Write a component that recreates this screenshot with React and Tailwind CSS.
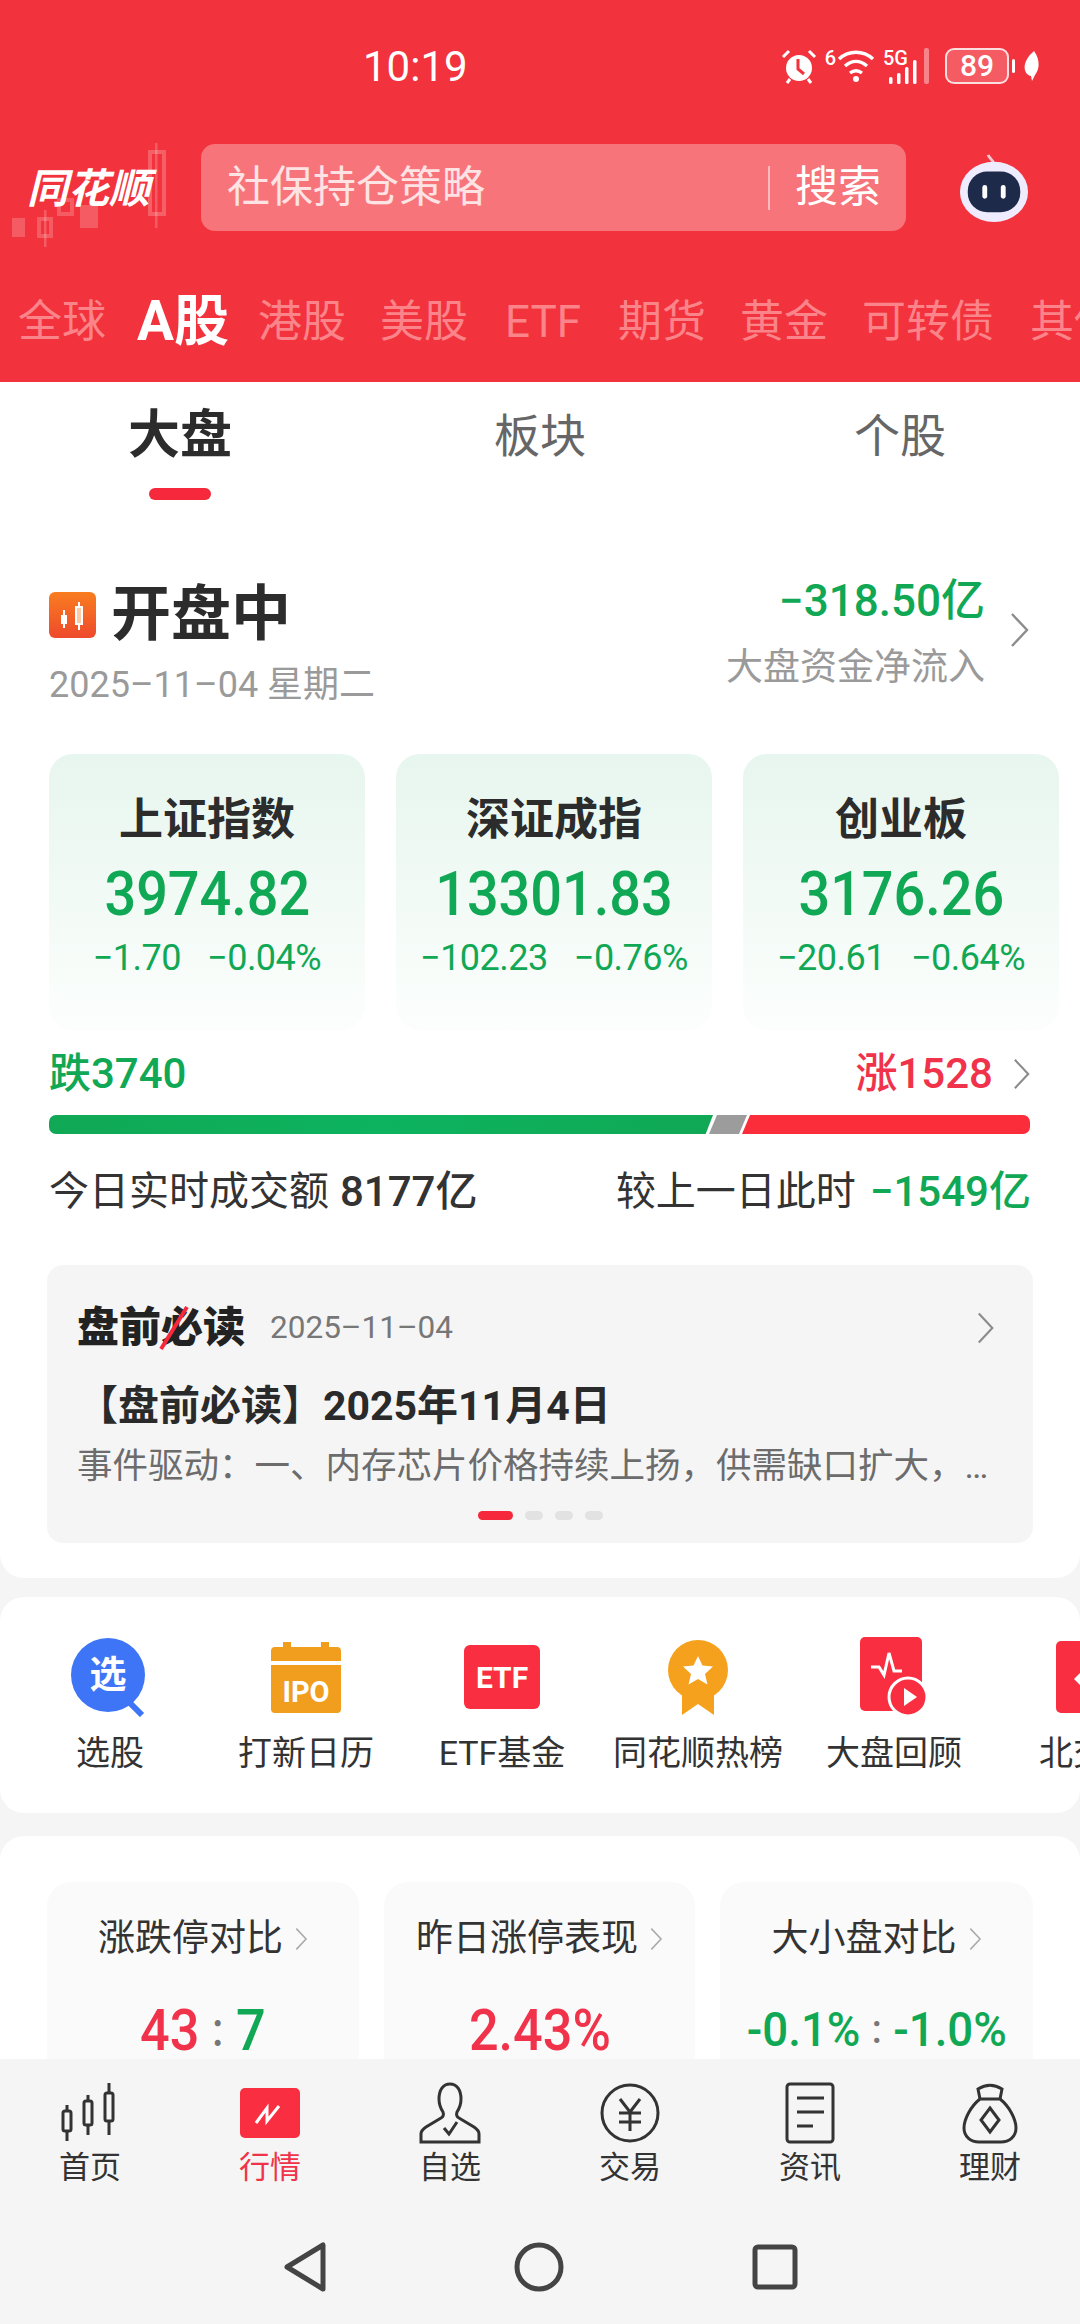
const FONT = "font-['Roboto','Noto_Sans_CJK_SC',sans-serif]";

const indexCards = [
  { name: "上证指数", value: "3974.82", change: "−1.70", pct: "−0.04%" },
  { name: "深证成指", value: "13301.83", change: "−102.23", pct: "−0.76%" },
  { name: "创业板", value: "3176.26", change: "−20.61", pct: "−0.64%" },
];

function Chevron({ className }) {
  return (
    <svg viewBox="0 0 20 36" fill="none" stroke="currentColor" strokeWidth="2.4" className={className}>
      <path d="M2 2l15 16L2 34" />
    </svg>
  );
}

function Logo() {
  return (
    <div className="relative h-[87px] w-[201px] shrink-0">
      <svg viewBox="0 0 170 120" className="absolute left-0 top-[-14px] h-[120px] w-[170px]" fill="#fff" fillOpacity="0.2">
        <rect x="12" y="88" width="13" height="19" />
        <rect x="39" y="89" width="12" height="17" fill="none" stroke="#fff" strokeOpacity="0.2" strokeWidth="4" />
        <rect x="44" y="80" width="2.5" height="37" />
        <rect x="59" y="70" width="13" height="14" fill="none" stroke="#fff" strokeOpacity="0.2" strokeWidth="4" />
        <rect x="80" y="75" width="18" height="23" />
        <rect x="150" y="22" width="14" height="62" fill="none" stroke="#fff" strokeOpacity="0.22" strokeWidth="4" />
        <rect x="155" y="13" width="2.5" height="85" />
      </svg>
      <span className="absolute left-[27px] top-[25px] text-[41px] font-bold italic leading-none text-white">
        同花顺
      </span>
    </div>
  );
}

function Robot() {
  return (
    <svg viewBox="0 0 74 72" className="h-[70px] w-[72px]">
      <path d="M37 12c0-5-5-6-6-10" fill="none" stroke="#f6c6d4" strokeWidth="3" />
      <ellipse cx="37" cy="40" rx="35" ry="31" fill="#f0ecff" />
      <rect x="10" y="19" width="54" height="42" rx="20" fill="#1e2a4a" />
      <rect x="25" y="33" width="5" height="14" rx="2.5" fill="#fff" />
      <rect x="44" y="33" width="5" height="14" rx="2.5" fill="#fff" />
    </svg>
  );
}

function StatusIcons() {
  return (
    <div className="flex items-center text-white">
      <svg viewBox="0 0 36 36" className="h-[36px] w-[36px]">
        <circle cx="18" cy="20" r="13" fill="#fff" />
        <path d="M17 11v10l6 5" fill="none" stroke="#f2323c" strokeWidth="3" />
        <path d="M2 9l6-6M34 9l-6-6" stroke="#fff" strokeWidth="3" />
        <path d="M9 31l-3 4M27 31l3 4" stroke="#fff" strokeWidth="3" />
      </svg>
      <span className="ml-[8px] self-start text-[20px] font-medium leading-none">6</span>
      <svg viewBox="0 0 38 34" className="ml-[1px] h-[34px] w-[38px]" fill="none" stroke="#fff" strokeWidth="3.4">
        <path d="M2 10c10-9 24-9 34 0M8 17c7-6 15-6 22 0M13 24c4-3 8-3 12 0" />
        <circle cx="19" cy="30" r="3" fill="#fff" stroke="none" />
      </svg>
      <div className="relative ml-[8px] h-[36px] w-[50px]">
        <span className="absolute left-0 top-0 text-[20px] font-medium leading-none">5G</span>
        <svg viewBox="0 0 50 36" className="absolute inset-0 h-[36px] w-[50px]" fill="#fff">
          <rect x="6" y="29" width="3.5" height="7" rx="1.5" />
          <rect x="14" y="25" width="3.5" height="11" rx="1.5" />
          <rect x="22" y="19" width="3.5" height="17" rx="1.5" />
          <rect x="30" y="12" width="3.5" height="24" rx="1.5" />
          <rect x="41" y="0" width="5" height="36" rx="2" fillOpacity="0.4" />
        </svg>
      </div>
      <div className="relative ml-[12px] flex h-[36px] w-[64px] items-center justify-center overflow-hidden rounded-[9px] border-2 border-white/80 bg-white/20">
        <span className="text-[30px] font-medium leading-none">89</span>
      </div>
      <div className="ml-[3px] h-[14px] w-[3px] rounded-full bg-white" />
      <svg viewBox="0 0 18 30" className="ml-[7px] h-[30px] w-[18px]" fill="#fff">
        <path d="M12 0c6 8 6 18 1 24l-3 6-1-5C2 24-2 12 12 0z" />
      </svg>
    </div>
  );
}

function MarketTabs() {
  const plain = "shrink-0 text-[44px] leading-none text-[#fa8489]";
  return (
    <div className="flex flex-1 items-center gap-[34px] overflow-hidden whitespace-nowrap pl-[18px] pt-[30px]">
      <span className={plain}>全球</span>
      <span className="-ml-[3px] -mr-[5px] shrink-0 text-[55px] font-bold leading-none text-white">A股</span>
      <span className={plain}>港股</span>
      <span className={plain}>美股</span>
      <span className="mx-[3px] shrink-0 text-[44px] leading-none text-[#fa8489]">ETF</span>
      <span className={plain}>期货</span>
      <span className={plain}>黄金</span>
      <span className={plain}>可转债</span>
      <span className="ml-[2px] shrink-0 text-[44px] leading-none text-[#fa8489]">其他</span>
    </div>
  );
}

function Header() {
  return (
    <div className="flex h-[382px] shrink-0 flex-col bg-[#f2323c]">
      <div className="flex h-[144px] shrink-0 items-start pl-[363px] pr-[40px] pt-[48px]">
        <span className="text-[42px] font-normal leading-[38px] text-white">10:19</span>
        <div className="ml-auto">
          <StatusIcons />
        </div>
      </div>
      <div className="flex h-[87px] shrink-0 items-center">
        <Logo />
        <div className="flex h-[87px] w-[705px] shrink-0 items-center rounded-[14px] bg-[#f8747b] pl-[26px]">
          <span className="text-[43px] leading-none text-white/80">社保持仓策略</span>
          <div className="ml-auto h-[44px] w-[2px] bg-white/50" />
          <span className="ml-[25px] mr-[25px] text-[43px] leading-none text-white">搜索</span>
        </div>
        <div className="ml-[52px]">
          <Robot />
        </div>
      </div>
      <MarketTabs />
    </div>
  );
}

function IndexCard({ card }) {
  return (
    <div className="flex h-[276px] w-[316px] flex-col items-center rounded-[24px] bg-gradient-to-b from-[#e7f6ee] to-[#fcfefd] pt-[39px]">
      <div className="text-[44px] font-bold leading-[54px] text-[#2c2c2c]">{card.name}</div>
      <div className="mt-[12px] scale-x-[0.9] text-[62px] font-medium leading-[70px] text-[#10a855]">
        {card.value}
      </div>
      <div className="mt-[9px] flex gap-[26px] text-[36px] leading-[40px] tracking-[-0.5px] text-[#10a855]">
        <span>{card.change}</span>
        <span>{card.pct}</span>
      </div>
    </div>
  );
}

function BreadthBar() {
  return (
    <div className="relative mt-[17px] flex h-[19px] w-[981px] overflow-hidden rounded-[7px]">
      <div className="h-full w-[664px] bg-gradient-to-r from-[#10a855] via-[#0db35f] to-[#10a855] [clip-path:polygon(0_0,100%_0,98.9%_100%,0_100%)]" />
      <div className="-ml-[4px] h-full w-[38px] bg-[#9c9c9c] [clip-path:polygon(21%_0,100%_0,79%_100%,0_100%)]" />
      <div className="-ml-[5px] h-full flex-1 bg-[#fb2d3a] [clip-path:polygon(2.8%_0,100%_0,100%_100%,0_100%)]" />
    </div>
  );
}

function Overview() {
  return (
    <div>
      <div className="flex pl-[49px]">
        <div className="flex-1">
          <div className="flex items-center pt-[5px]">
            <svg viewBox="0 0 47 46" className="h-[46px] w-[47px]">
              <defs>
                <linearGradient id="openBadge" x1="0" y1="0" x2="0" y2="1">
                  <stop offset="0" stopColor="#f97d20" />
                  <stop offset="1" stopColor="#ee4a2c" />
                </linearGradient>
              </defs>
              <rect width="47" height="46" rx="6" fill="url(#openBadge)" />
              <path d="M15 18v18M30 10v28" stroke="#fff" strokeWidth="2" />
              <rect x="12" y="23" width="6" height="9" fill="#fff" />
              <rect x="27" y="15" width="6" height="17" fill="#ffc9a8" stroke="#fff" strokeWidth="2" />
            </svg>
            <span className="ml-[15px] text-[60px] font-bold leading-[80px] text-[#2c2c2c]">开盘中</span>
          </div>
          <div className="mt-[8px] text-[36px] leading-[44px] text-[#9a9a9a]">2025–11–04 星期二</div>
        </div>
        <div className="flex items-start pr-[50px]">
          <div className="flex flex-col items-end pt-[1px]">
            <div className="text-[44px] font-medium leading-[60px] text-[#10a855]">−318.50亿</div>
            <div className="mt-[15px] text-[37px] leading-[44px] text-[#9a9a9a]">大盘资金净流入</div>
          </div>
          <Chevron className="ml-[25px] mt-[42px] h-[36px] w-[20px] text-[#8c8c8c]" />
        </div>
      </div>

      <div className="mt-[47px] flex gap-[31px] pl-[49px]">
        {indexCards.map((card) => (
          <IndexCard key={card.name} card={card} />
        ))}
      </div>

      <div className="px-[49px] pt-[20px]">
        <div className="flex h-[48px] items-center">
          <span className="text-[42px] font-medium leading-none text-[#10a855]">跌3740</span>
          <span className="ml-auto text-[42px] font-medium leading-none text-[#f0334a]">涨1528</span>
          <Chevron className="ml-[20px] h-[32px] w-[18px] text-[#8c8c8c]" />
        </div>
        <BreadthBar />
        <div className="mt-[32px] flex h-[52px] items-center text-[40px] leading-none text-[#333]">
          <span>今日实时成交额</span>
          <span className="ml-[11px] text-[42px] font-medium">8177亿</span>
          <span className="ml-auto">较上一日此时</span>
          <span className="ml-[14px] text-[42px] font-medium text-[#10a855]">−1549亿</span>
        </div>
      </div>
    </div>
  );
}

function BriefCard() {
  return (
    <div className="mx-[47px] mt-[47px] h-[278px] rounded-[16px] bg-[#f5f5f5] px-[30px] pt-[37px]">
      <div className="flex h-[52px] items-center">
        <div className="relative">
          <span className="text-[42px] font-black leading-none text-[#222]">盘前必读</span>
          <svg viewBox="0 0 40 46" className="absolute left-[80px] top-[-2px] h-[46px] w-[40px]">
            <path d="M4 44L30 2" stroke="#f5283c" strokeWidth="4" />
          </svg>
        </div>
        <span className="ml-[25px] text-[31.5px] leading-none text-[#777]">2025–11–04</span>
        <Chevron className="ml-auto mr-[8px] h-[34px] w-[18px] text-[#8c8c8c]" />
      </div>
      <div className="mt-[27px] text-[41px] font-bold leading-[50px] text-[#2a2a2a]">【盘前必读】2025年11月4日</div>
      <div className="mt-[15px] truncate text-[35.5px] leading-[40px] text-[#6c6c6c]">
        事件驱动：一、内存芯片价格持续上扬，供需缺口扩大，…
      </div>
      <div className="mt-[25px] flex items-center justify-center gap-[12px]">
        <div className="h-[9px] w-[35px] rounded-full bg-[#f5283c]" />
        <div className="h-[9px] w-[18px] rounded-full bg-[#e2e2e2]" />
        <div className="h-[9px] w-[18px] rounded-full bg-[#e2e2e2]" />
        <div className="h-[9px] w-[18px] rounded-full bg-[#e2e2e2]" />
      </div>
    </div>
  );
}

function PickIcon() {
  return (
    <svg viewBox="0 0 80 80" className="h-[80px] w-[80px]">
      <circle cx="38" cy="38" r="37" fill="#3e75f6" />
      <path d="M58 64l14 14" stroke="#3e75f6" strokeWidth="6" />
      <text x="38" y="51" textAnchor="middle" fontSize="37" fontWeight="700" fill="#fff">选</text>
    </svg>
  );
}

function IpoIcon() {
  return (
    <svg viewBox="0 0 80 80" className="h-[80px] w-[80px]">
      <path d="M5 14a4 4 0 014-4h8V5h8v5h30V5h8v5h8a4 4 0 014 4v10H5z" fill="#f19d1d" />
      <path d="M5 28h70v44a4 4 0 01-4 4H9a4 4 0 01-4-4z" fill="#f19d1d" />
      <text x="40" y="65" textAnchor="middle" fontSize="29" fontWeight="700" fill="#fff">IPO</text>
    </svg>
  );
}

function EtfIcon() {
  return (
    <svg viewBox="0 0 80 80" className="h-[80px] w-[80px]">
      <rect x="2" y="8" width="76" height="64" rx="6" fill="#f92f41" />
      <text x="40" y="51" textAnchor="middle" fontSize="30" fontWeight="700" fill="#fff">ETF</text>
    </svg>
  );
}

function MedalIcon() {
  return (
    <svg viewBox="0 0 80 80" className="h-[80px] w-[80px]">
      <path d="M24 50v28l16-11 16 11V50z" fill="#f5a11e" />
      <circle cx="40" cy="33" r="30" fill="#f5a11e" />
      <path d="M40 19l4.500 9.500 10.500 1-8 7.500 2.500 10.500-9.500-5.500-9.500 5.500 2.500-10.500-8-7.500 10.500-1z" fill="#fff" />
    </svg>
  );
}

function ReviewIcon() {
  return (
    <svg viewBox="0 0 80 80" className="h-[80px] w-[80px]">
      <rect x="6" y="0" width="62" height="74" rx="5" fill="#f92f41" />
      <path d="M17 30h8l5 8 5-22 5 18h8" fill="none" stroke="#fff" strokeWidth="3" />
      <circle cx="54" cy="60" r="19" fill="#f92f41" stroke="#fff" strokeWidth="3" />
      <path d="M50 51l13 9-13 9z" fill="#fff" />
    </svg>
  );
}

function BeijingIcon() {
  return (
    <svg viewBox="0 0 80 80" className="h-[80px] w-[80px]">
      <rect x="6" y="4" width="68" height="72" rx="5" fill="#f92f41" />
      <path d="M38 28L24 42l14 14 14-14z" fill="#fff" />
    </svg>
  );
}

const shortcuts = [
  { label: "选股", Icon: PickIcon },
  { label: "打新日历", Icon: IpoIcon },
  { label: "ETF基金", Icon: EtfIcon },
  { label: "同花顺热榜", Icon: MedalIcon },
  { label: "大盘回顾", Icon: ReviewIcon },
  { label: "北交所", Icon: BeijingIcon },
];

function Shortcuts() {
  return (
    <div className="mt-[19px] h-[216px] shrink-0 overflow-hidden rounded-[24px] bg-white pt-[40px]">
      <div className="flex pl-[12px]">
        {shortcuts.map(({ label, Icon }) => (
          <div key={label} className="flex w-[196px] shrink-0 flex-col items-center">
            <Icon />
            <div className="mt-[16px] whitespace-nowrap text-[34px] leading-[40px] text-[#333]">{label}</div>
          </div>
        ))}
      </div>
    </div>
  );
}

function MiniCard({ title, width, children }) {
  return (
    <div className={`h-[240px] shrink-0 rounded-[24px] bg-[#fafafa] pt-[36px] ${width}`}>
      <div className="flex items-center justify-center text-[37px] leading-[42px] text-[#333]">
        {title}
        <Chevron className="ml-[12px] h-[24px] w-[13px] text-[#aaa]" />
      </div>
      <div className="mt-[40px] flex h-[60px] items-center justify-center font-medium leading-none">{children}</div>
    </div>
  );
}

function Compare() {
  return (
    <div className="mt-[23px] flex-1 rounded-t-[24px] bg-white pl-[47px] pt-[46px]">
      <div className="flex gap-[25px]">
        <MiniCard title="涨跌停对比" width="w-[312px]">
          <div className="flex scale-x-[0.9] items-center">
            <span className="text-[58px] text-[#f0334a]">43</span>
            <span className="mx-[14px] text-[48px] text-[#777]">:</span>
            <span className="text-[58px] text-[#10a855]">7</span>
          </div>
        </MiniCard>
        <MiniCard title="昨日涨停表现" width="w-[311px]">
          <span className="scale-x-[0.9] text-[58px] text-[#f0334a]">2.43%</span>
        </MiniCard>
        <MiniCard title="大小盘对比" width="w-[313px]">
          <div className="flex scale-x-[0.95] items-center whitespace-nowrap">
            <span className="text-[48px] text-[#10a855]">-0.1%</span>
            <span className="mx-[12px] text-[40px] text-[#777]">:</span>
            <span className="text-[48px] text-[#10a855]">-1.0%</span>
          </div>
        </MiniCard>
      </div>
    </div>
  );
}

const navStroke = {
  fill: "none",
  stroke: "#333",
  strokeWidth: 3,
};

function HomeIcon() {
  return (
    <svg viewBox="0 0 64 64" className="h-[64px] w-[64px]" {...navStroke}>
      <rect x="5" y="30" width="8" height="20" rx="2" />
      <path d="M9 24v6M9 50v10" />
      <rect x="26" y="20" width="8" height="24" rx="2" />
      <path d="M30 14v6M30 44v10" />
      <rect x="47" y="12" width="8" height="28" rx="2" />
      <path d="M51 2v10M51 40v14" />
    </svg>
  );
}

function MarketIcon() {
  return (
    <svg viewBox="0 0 64 64" className="h-[64px] w-[64px]">
      <rect x="2" y="7" width="60" height="50" rx="5" fill="#f92f41" />
      <path d="M18 42l11-15v13l12-15" fill="none" stroke="#fff" strokeWidth="3" />
    </svg>
  );
}

function WatchIcon() {
  return (
    <svg viewBox="0 0 64 64" className="h-[64px] w-[64px]" {...navStroke}>
      <path d="M32 3c-7 0-11 6-11 15 0 6 2 10 4 13 1 3 0 5-2 6L8 46c-3 2-5 4-5 7v8h58v-8c0-3-2-5-5-7l-15-9c-2-1-3-3-2-6 2-3 4-7 4-13 0-9-4-15-11-15z" />
      <path d="M26 47l5 6 8-12" />
    </svg>
  );
}

function TradeIcon() {
  return (
    <svg viewBox="0 0 64 64" className="h-[64px] w-[64px]" {...navStroke}>
      <circle cx="32" cy="32" r="28" />
      <path d="M22 18l10 13 10-13M21 32h22M21 41h22M32 31v19" />
    </svg>
  );
}

function NewsIcon() {
  return (
    <svg viewBox="0 0 64 64" className="h-[64px] w-[64px]" {...navStroke}>
      <rect x="9" y="3" width="46" height="58" rx="3" />
      <path d="M19 17h27M19 31h27M19 45h16" />
    </svg>
  );
}

function WealthIcon() {
  return (
    <svg viewBox="0 0 64 64" className="h-[64px] w-[64px]" {...navStroke}>
      <path d="M22 18l-2-10c8-5 16-5 24 0l-2 10" />
      <path d="M22 18h20c9 7 16 20 16 29 0 9-7 14-15 14H21C13 61 6 56 6 47c0-9 7-22 16-29z" />
      <path d="M32 27l9 12-9 12-9-12z" />
    </svg>
  );
}

const navItems = [
  { label: "首页", Icon: HomeIcon },
  { label: "行情", Icon: MarketIcon, active: true },
  { label: "自选", Icon: WatchIcon },
  { label: "交易", Icon: TradeIcon },
  { label: "资讯", Icon: NewsIcon },
  { label: "理财", Icon: WealthIcon },
];

function BottomNav() {
  return (
    <div className="relative z-10 h-[265px] shrink-0 bg-[#f5f5f5] pt-[22px]">
      <div className="grid grid-cols-6">
        {navItems.map(({ label, Icon, active }) => (
          <div key={label} className="flex flex-col items-center">
            <Icon />
            <div className={`mt-[4px] text-[31px] leading-[38px] ${active ? "text-[#f0334a]" : "text-[#333]"}`}>
              {label}
            </div>
          </div>
        ))}
      </div>
      <div className="mt-[55px] flex items-center justify-center gap-[190px]">
        <svg viewBox="0 0 44 50" className="h-[50px] w-[44px] translate-x-[3px]" fill="none" stroke="#444" strokeWidth="5" strokeLinejoin="round">
          <path d="M40 3v44L4 25z" />
        </svg>
        <svg viewBox="0 0 50 50" className="h-[50px] w-[50px]" fill="none" stroke="#444" strokeWidth="5">
          <circle cx="25" cy="25" r="22" />
        </svg>
        <svg viewBox="0 0 46 46" className="h-[46px] w-[46px] -translate-x-[2px]" fill="none" stroke="#444" strokeWidth="5">
          <rect x="3" y="3" width="40" height="40" rx="3" />
        </svg>
      </div>
    </div>
  );
}

export default function App() {
  return (
    <div className={`flex h-[2324px] w-[1080px] flex-col overflow-hidden bg-[#f5f5f5] ${FONT}`}>
      <Header />
      <div className="flex min-h-0 flex-1 flex-col overflow-hidden">
        <div className="h-[1196px] shrink-0 rounded-b-[24px] bg-white">
          <div className="grid h-[188px] grid-cols-3">
            <div className="flex flex-col items-center pt-[28px]">
              <span className="text-[52px] font-bold leading-[52px] text-[#2c2c2c]">大盘</span>
              <div className="mt-[26px] h-[12px] w-[62px] rounded-full bg-[#f5283c]" />
            </div>
            <div className="pt-[28px] text-center text-[46px] leading-[52px] text-[#666]">板块</div>
            <div className="pt-[28px] text-center text-[46px] leading-[52px] text-[#666]">个股</div>
          </div>
          <Overview />
          <BriefCard />
        </div>
        <Shortcuts />
        <Compare />
      </div>
      <BottomNav />
    </div>
  );
}
